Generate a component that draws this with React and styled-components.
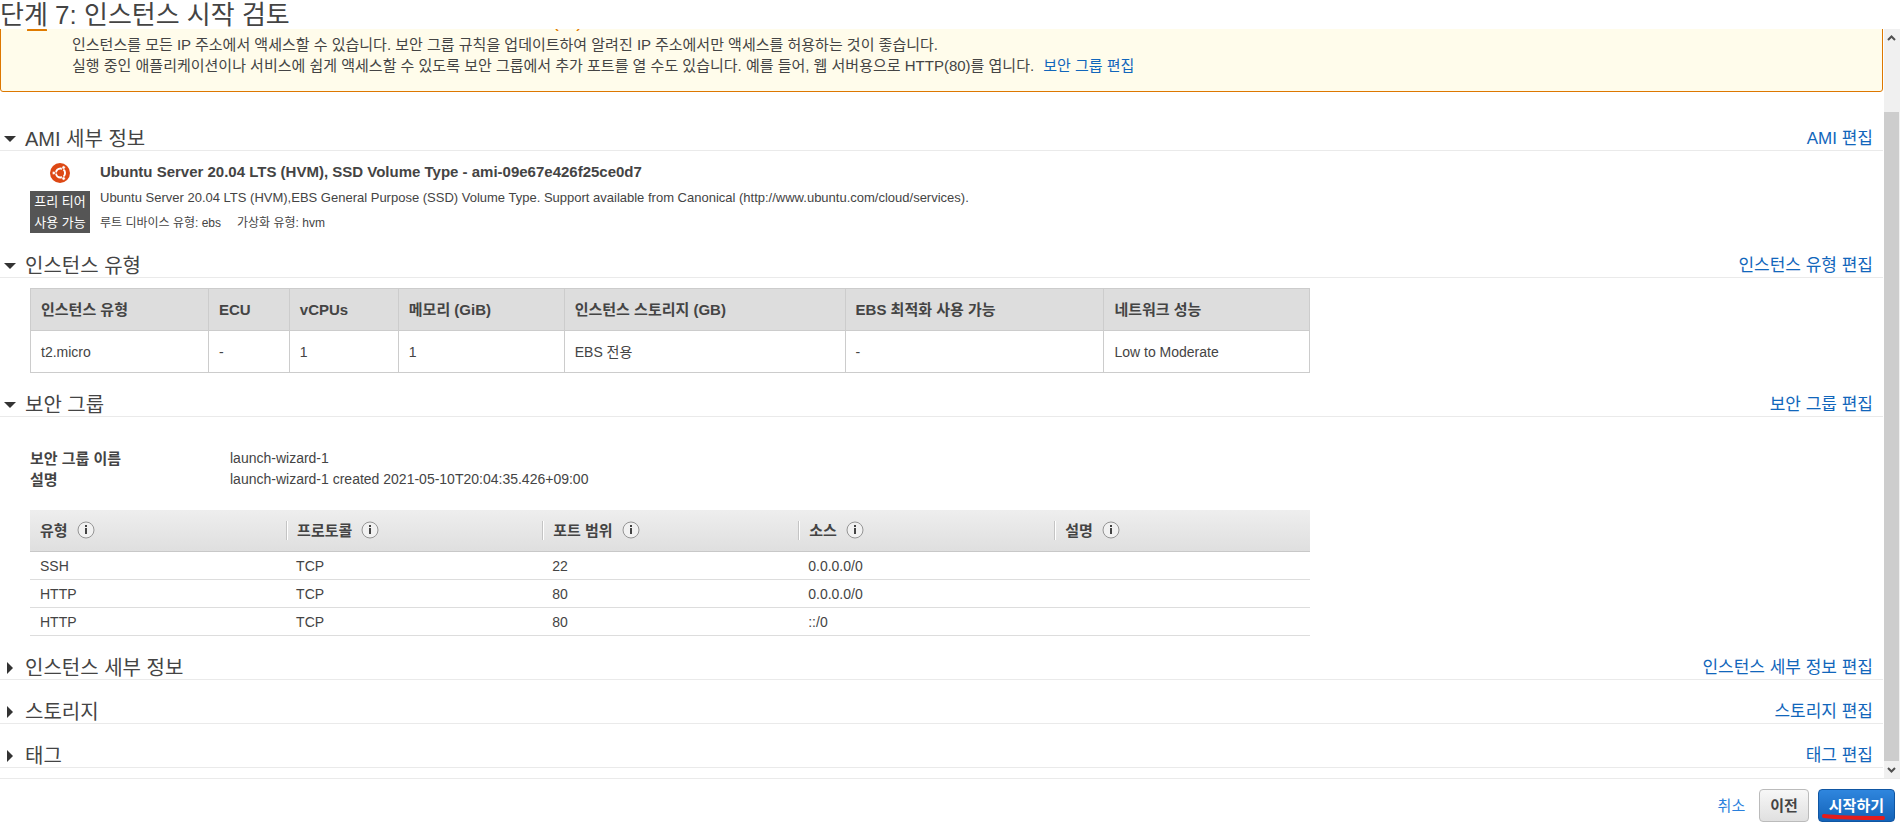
import React, { useLayoutEffect, useRef, useState } from "react";
import styled, { createGlobalStyle, css } from "styled-components";

const GlobalStyle = createGlobalStyle`
  * {
    box-sizing: border-box;
  }

  body {
    margin: 0;
    background: #fff;
    color: #444;
    font-family: "Liberation Sans", "Noto Sans CJK KR", sans-serif;
    font-size: 14px;
    line-height: 21px;
  }
`;

const Page = styled.div`
  display: flex;
  flex-direction: column;
  height: 100vh;
`;

const Title = styled.h1`
  flex: none;
  height: 29px;
  margin: 0;
  font-size: 26px;
  font-weight: 400;
  line-height: 31px;
`;

const Body = styled.div`
  flex: 1;
  display: flex;
  min-height: 0;
  padding-right: 2px;
`;

const Scroller = styled.main`
  flex: 1;
  padding-right: 1px;
  overflow-y: auto;
  scrollbar-width: none;
`;

/* Scrollbar */
const Track = styled.div`
  flex: none;
  display: flex;
  flex-direction: column;
  width: 16px;
  padding-right: 1px;
  background: #f0f0f0;
`;

const TrackArrow = styled.svg`
  flex: none;
  width: 15px;
  height: 17px;
`;

const TrackGap = styled.div`
  flex: 66;
`;

const Thumb = styled.div`
  flex: 649;
  background: #cdcdcd;
`;

/* Warning box */
const Alert = styled.section`
  display: flex;
  gap: 25px;
  padding: 16px 26px 15px;
  border: 1px solid #dd7700;
  border-radius: 3px;
  background: #fffceb;
`;

const AlertIcon = styled.svg`
  flex: none;
  width: 20px;
  height: 20px;
  margin-top: 4px;
`;

const AlertTitle = styled.h2`
  margin: 0;
  color: #e07b00;
  font-size: 19px;
  font-weight: 400;
  line-height: 27px;
`;

const AlertText = styled.p`
  margin: 0;
  font-size: 15px;
`;

const Link = styled.a`
  color: #1166bb;
  text-decoration: none;
`;

const AlertLink = styled(Link)`
  margin-left: 5px;
`;

/* Sections */
const Section = styled.section`
  padding-top: ${(p) => p.$space || 12}px;
`;

const SectionHead = styled.header`
  display: flex;
  align-items: flex-end;
  justify-content: space-between;
  height: 32px;
  padding-right: 10px;
  border-bottom: 1px solid #eaeaea;
`;

const Toggle = styled.button`
  display: flex;
  align-items: center;
  gap: 9px;
  padding: 0 0 0 3px;
  border: 0;
  background: none;
  color: inherit;
  font: inherit;
  font-size: 20px;
  line-height: 22px;
  cursor: pointer;
`;

const Caret = styled.svg`
  width: 13px;
  height: 12px;
`;

const EditLink = styled(Link)`
  font-size: 17px;
  line-height: 22px;
`;

/* AMI */
const Ami = styled.div`
  display: flex;
  gap: 10px;
  padding: 9px 0 9px 30px;
`;

const AmiBadge = styled.div`
  display: flex;
  flex-direction: column;
  align-items: center;
  gap: 8px;
  padding-top: 3px;
`;

const FreeTier = styled.div`
  width: 60px;
  background: #555;
  color: #fff;
  font-size: 13px;
  text-align: center;
`;

const AmiName = styled.h3`
  margin: 0 0 5px;
  font-size: 15px;
  line-height: 24px;
`;

const AmiText = styled.p`
  margin: 0 0 7px;
  font-size: 13px;
  line-height: 18px;
`;

const AmiMeta = styled.div`
  display: flex;
  gap: 16px;
  font-size: 12px;
  line-height: 18px;
`;

/* Instance type table */
const Inset = styled.div`
  padding: ${(p) => p.$top}px 0 0 30px;
`;

const TypeTable = styled.table`
  width: 69.1%;
  border-collapse: collapse;
  table-layout: fixed;

  th,
  td {
    height: 42px;
    padding: 0 10px;
    border: 1px solid #ccc;
    text-align: left;
  }

  td {
    padding-top: 2px;
  }

  th {
    background: #ddd;
    font-size: 15px;
  }
`;

/* Security group */
const Details = styled.dl`
  display: grid;
  grid-template-columns: 200px 1fr;
  margin: 0 0 20px;

  dt {
    font-size: 15px;
    font-weight: 700;
  }

  dd {
    margin: 0;
  }
`;

const RuleTable = styled.table`
  width: 69.1%;
  border-collapse: collapse;
  table-layout: fixed;

  td {
    height: 28px;
    padding: 2px 10px 0;
    border-bottom: 1px solid #ddd;
  }

  thead {
    background: linear-gradient(#eee, #dfdfdf);
  }

  th {
    height: 41px;
    padding: 0;
    border-bottom: 1px solid #c8c8c8;
    font-size: 15px;
    text-align: left;
  }
`;

const HeadCell = styled.div`
  display: flex;
  align-items: center;
  gap: 9px;
  height: 19px;
  padding-left: 10px;
  ${(p) =>
    p.$divided &&
    css`
      border-left: 1px solid #c4c4c4;
      box-shadow: inset 1px 0 #fff;
    `}
`;

/* Footer */
const Footer = styled.footer`
  flex: none;
  display: flex;
  align-items: center;
  justify-content: flex-end;
  gap: 9px;
  height: 53px;
  margin-right: 2px;
  padding: 0 5px 0 0;
  border-top: 1px solid #eaeaea;
`;

const Button = styled.button`
  height: 33px;
  padding: 0 10px;
  border: 1px solid #bbb;
  border-radius: 4px;
  background: linear-gradient(#f7f7f7, #e0e0e0);
  color: #444;
  font: inherit;
  font-size: 15px;
  font-weight: 700;
  cursor: pointer;
  ${(p) =>
    p.$primary &&
    css`
      border-color: #0f56a3;
      background: linear-gradient(#2f86de, #1463b8);
      color: #fff;
    `}
`;

const CancelLink = styled(Link)`
  padding-right: 5px;
  color: #2a80dc;
  font-size: 15px;
`;

const Marked = styled.span`
  position: relative;
  display: flex;
`;

const Stroke = styled.svg`
  position: absolute;
  left: 4px;
  bottom: 2px;
  width: 64px;
  height: 6px;
  pointer-events: none;
`;

const InfoIcon = () => (
  <svg width="18" height="18" viewBox="0 0 18 18">
    <circle cx="9" cy="9" r="8" fill="#f1f1f1" stroke="#959595" />
    <path d="M8 4h2v2H8zM8 7h2v6H8z" fill="#444" />
  </svg>
);

const UbuntuLogo = () => (
  <svg width="20" height="20" viewBox="0 0 20 20">
    <circle cx="10" cy="10" r="10" fill="#dd4814" />
    <circle cx="10.500" cy="10" r="4.500" fill="none" stroke="#fff" strokeWidth="2" />
    <g stroke="#dd4814" strokeWidth="1">
      <path d="M10.500 10L3 10M10.500 10L14 3.900M10.500 10L14 16.100" />
    </g>
    <circle cx="10.500" cy="10" r="3" fill="#dd4814" />
    <g fill="#fff" stroke="#dd4814" strokeWidth="0.6">
      <circle cx="3.800" cy="10" r="1.700" />
      <circle cx="13.600" cy="4.500" r="1.700" />
      <circle cx="13.600" cy="15.500" r="1.700" />
    </g>
  </svg>
);

const typeColumns = [
  ["인스턴스 유형", "t2.micro", 178],
  ["ECU", "-", 81],
  ["vCPUs", "1", 109],
  ["메모리 (GiB)", "1", 166],
  ["인스턴스 스토리지 (GB)", "EBS 전용", 281],
  ["EBS 최적화 사용 가능", "-", 259],
  ["네트워크 성능", "Low to Moderate", 206],
];

const ruleColumns = ["유형", "프로토콜", "포트 범위", "소스", "설명"];

const rules = [
  ["SSH", "TCP", "22", "0.0.0.0/0", ""],
  ["HTTP", "TCP", "80", "0.0.0.0/0", ""],
  ["HTTP", "TCP", "80", "::/0", ""],
];

const Panel = ({ title, edit, space, defaultOpen = false, children }) => {
  const [open, setOpen] = useState(defaultOpen);

  return (
    <Section $space={space}>
      <SectionHead>
        <Toggle type="button" aria-expanded={open} onClick={() => setOpen(!open)}>
          <Caret viewBox="0 0 13 12">
            <path d={open ? "M1 3h12l-6 6z" : "M4 0v12l6-6z"} fill="#333" />
          </Caret>
          {title}
        </Toggle>
        <EditLink href="#">{edit}</EditLink>
      </SectionHead>
      {open && children}
    </Section>
  );
};

const App = () => {
  const scroller = useRef(null);

  // The review step opens scrolled down to the last section
  useLayoutEffect(() => {
    scroller.current.scrollTop = scroller.current.scrollHeight;
  }, []);

  return (
    <Page>
      <GlobalStyle />
      <Title>단계 7: 인스턴스 시작 검토</Title>

      <Body>
        <Scroller ref={scroller}>
          <Alert>
            <AlertIcon viewBox="0 0 20 20">
              <path d="M10 2L19 19H1z" fill="none" stroke="#e07b00" strokeWidth="2" />
              <path d="M9 8h2v5H9zM9 14h2v2H9z" fill="#e07b00" />
            </AlertIcon>
            <div>
              <AlertTitle>
                인스턴스 보안을 개선하십시오. 보안 그룹 launch-wizard-1이(가) 세계에 개방되어 있습니다.
              </AlertTitle>
              <AlertText>
                인스턴스를 모든 IP 주소에서 액세스할 수 있습니다. 보안 그룹 규칙을 업데이트하여 알려진 IP 주소에서만
                액세스를 허용하는 것이 좋습니다.
              </AlertText>
              <AlertText>
                실행 중인 애플리케이션이나 서비스에 쉽게 액세스할 수 있도록 보안 그룹에서 추가 포트를 열 수도
                있습니다. 예를 들어, 웹 서버용으로 HTTP(80)를 엽니다. <AlertLink href="#">보안 그룹 편집</AlertLink>
              </AlertText>
            </div>
          </Alert>

          <Panel title="AMI 세부 정보" edit="AMI 편집" space={27} defaultOpen>
            <Ami>
              <AmiBadge>
                <UbuntuLogo />
                <FreeTier>
                  프리 티어
                  <br />
                  사용 가능
                </FreeTier>
              </AmiBadge>
              <div>
                <AmiName>Ubuntu Server 20.04 LTS (HVM), SSD Volume Type - ami-09e67e426f25ce0d7</AmiName>
                <AmiText>
                  Ubuntu Server 20.04 LTS (HVM),EBS General Purpose (SSD) Volume Type. Support available from
                  Canonical (http://www.ubuntu.com/cloud/services).
                </AmiText>
                <AmiMeta>
                  <span>루트 디바이스 유형: ebs</span>
                  <span>가상화 유형: hvm</span>
                </AmiMeta>
              </div>
            </Ami>
          </Panel>

          <Panel title="인스턴스 유형" edit="인스턴스 유형 편집" space={4} defaultOpen>
            <Inset $top={10}>
              <TypeTable>
                <colgroup>
                  {typeColumns.map(([name, , size]) => (
                    <col key={name} style={{ width: `${(size / 1280) * 100}%` }} />
                  ))}
                </colgroup>
                <thead>
                  <tr>
                    {typeColumns.map(([name]) => (
                      <th key={name}>{name}</th>
                    ))}
                  </tr>
                </thead>
                <tbody>
                  <tr>
                    {typeColumns.map(([name, value]) => (
                      <td key={name}>{value}</td>
                    ))}
                  </tr>
                </tbody>
              </TypeTable>
            </Inset>
          </Panel>

          <Panel title="보안 그룹" edit="보안 그룹 편집" defaultOpen>
            <Inset $top={31}>
              <Details>
                <dt>보안 그룹 이름</dt>
                <dd>launch-wizard-1</dd>
                <dt>설명</dt>
                <dd>launch-wizard-1 created 2021-05-10T20:04:35.426+09:00</dd>
              </Details>
              <RuleTable>
                <thead>
                  <tr>
                    {ruleColumns.map((name, i) => (
                      <th key={name}>
                        <HeadCell $divided={i > 0}>
                          {name}
                          <InfoIcon />
                        </HeadCell>
                      </th>
                    ))}
                  </tr>
                </thead>
                <tbody>
                  {rules.map((rule, i) => (
                    <tr key={i}>
                      {rule.map((value, j) => (
                        <td key={j}>{value}</td>
                      ))}
                    </tr>
                  ))}
                </tbody>
              </RuleTable>
            </Inset>
          </Panel>

          <Panel title="인스턴스 세부 정보" edit="인스턴스 세부 정보 편집" />
          <Panel title="스토리지" edit="스토리지 편집" />
          <Panel title="태그" edit="태그 편집" />
          <Section $space={10} />
        </Scroller>

        <Track aria-hidden="true">
          <TrackArrow viewBox="0 0 15 17">
            <path d="M4 11l3.500-3.500L11 11" fill="none" stroke="#505050" strokeWidth="2" />
          </TrackArrow>
          <TrackGap />
          <Thumb />
          <TrackArrow viewBox="0 0 15 17">
            <path d="M4 7l3.500 3.500L11 7" fill="none" stroke="#505050" strokeWidth="2" />
          </TrackArrow>
        </Track>
      </Body>

      <Footer>
        <CancelLink href="#">취소</CancelLink>
        <Button type="button">이전</Button>
        <Marked>
          <Button type="button" $primary>
            시작하기
          </Button>
          <Stroke viewBox="0 0 64 6">
            <path d="M2 2C20 4 40 4 61 4" fill="none" stroke="#e41c1c" strokeWidth="4" strokeLinecap="round" />
          </Stroke>
        </Marked>
      </Footer>
    </Page>
  );
};

export default App;
